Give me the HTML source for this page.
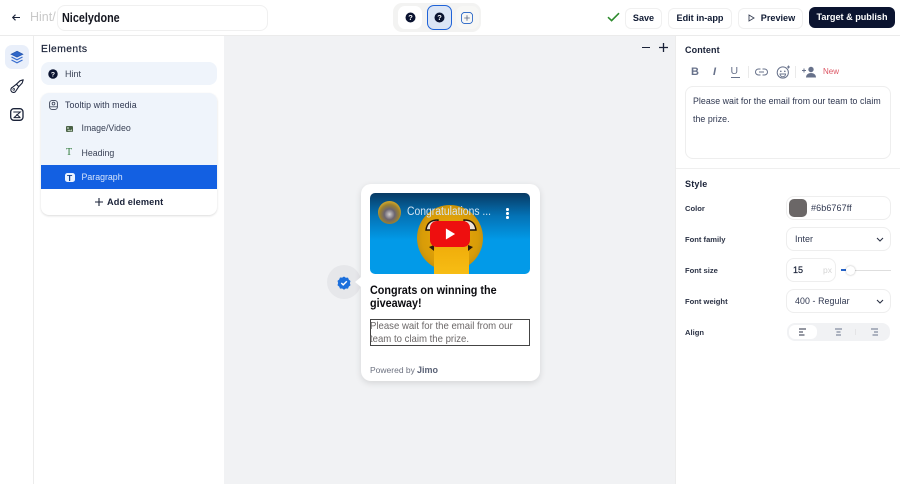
<!DOCTYPE html>
<html><head><meta charset="utf-8">
<style>
html,body{margin:0;padding:0;width:900px;height:484px;overflow:hidden;background:#fff;font-family:"Liberation Sans",sans-serif;color:#0b1530}
.a{position:absolute}
.t{position:absolute;white-space:nowrap;line-height:1}
.sx{transform-origin:0 0}
svg{position:absolute;overflow:visible}
.btn{position:absolute;top:8px;height:19px;border:1px solid #f0f0f0;border-radius:6px;background:#fff;font-weight:700;font-size:9.1px;line-height:19px;text-align:center;color:#0f1a33}
.lbl{position:absolute;left:685px;font-size:7.6px;font-weight:700;color:#2b3245;line-height:1;white-space:nowrap}
.inp{position:absolute;border:1px solid #eeeeee;border-radius:8px;background:#fff;box-sizing:border-box}
</style></head><body>
<!-- top bar -->
<div class="a" style="left:0;top:35px;width:900px;height:1px;background:#ebebeb"></div>
<svg style="left:11px;top:13px" width="10" height="9" viewBox="0 0 10 9"><path d="M9 4.5H1.5M4.5 1.7 1.7 4.5l2.8 2.8" fill="none" stroke="#1a2238" stroke-width="1.1"/></svg>
<div class="t" style="left:30px;top:11px;font-size:12.5px;color:#c9c9c9">Hint/</div>
<div class="inp" style="left:57px;top:5px;width:211px;height:26px;border-color:#f0f0f0"></div>
<div class="t sx" style="left:62px;top:11.5px;font-size:12.5px;font-weight:700;color:#14161f;transform:scaleX(.865)">Nicelydone</div>

<div class="a" style="left:393px;top:3px;width:88px;height:29px;border-radius:9px;background:#f3f3f2"></div>
<div class="a" style="left:398px;top:6px;width:24px;height:23px;border-radius:7px;background:#fff"></div>
<div class="a" style="left:427px;top:5px;width:23px;height:23px;border-radius:7px;background:#dbe5f5;border:1px solid #1f63d8"></div>
<div class="a" style="left:456px;top:6px;width:23px;height:23px;border-radius:7px;background:#f7f7f5"></div>
<svg style="left:405px;top:12px" width="11" height="11" viewBox="0 0 11 11"><circle cx="5.5" cy="5.5" r="5" fill="#0a1330"/><text x="5.5" y="8.2" font-size="7.5" font-weight="700" fill="#fff" text-anchor="middle" font-family="Liberation Sans">?</text></svg>
<svg style="left:434px;top:12px" width="11" height="11" viewBox="0 0 11 11"><circle cx="5.5" cy="5.5" r="5" fill="#0a1330"/><text x="5.5" y="8.2" font-size="7.5" font-weight="700" fill="#fff" text-anchor="middle" font-family="Liberation Sans">?</text></svg>
<svg style="left:461px;top:11.5px" width="12" height="12" viewBox="0 0 13 13"><rect x=".5" y=".5" width="12" height="12" rx="3.5" fill="none" stroke="#1f5fc4" stroke-width=".9"/><path d="M6.5 3.5v6M3.5 6.5h6" stroke="#5b6a85" stroke-width=".9"/></svg>

<svg style="left:607px;top:12px" width="13" height="10" viewBox="0 0 13 10"><path d="M1 5.2 4.6 8.6 12 1.2" fill="none" stroke="#2e8b2e" stroke-width="1.6"/></svg>
<div class="btn" style="left:625px;width:35px">Save</div>
<div class="btn" style="left:668px;width:62px">Edit in-app</div>
<div class="btn" style="left:738px;width:63px;text-indent:15px">Preview</div>
<svg style="left:748px;top:14px" width="7" height="8" viewBox="0 0 7 8"><path d="M1 1l5 3-5 3z" fill="none" stroke="#3a4256" stroke-width=".9"/></svg>
<div class="btn" style="left:809px;width:86px;height:21px;line-height:21px;top:7px;background:#0b1430;border:0;color:#fff">Target &amp; publish</div>

<!-- left rail -->
<div class="a" style="left:33px;top:36px;width:1px;height:448px;background:#ececec"></div>
<div class="a" style="left:5px;top:45px;width:24px;height:24px;border-radius:7px;background:#e9effa"></div>
<svg style="left:10px;top:50px" width="14" height="14" viewBox="0 0 14 14"><path d="M7 1.2 13 4.2 7 7.2 1 4.2z" fill="#2f66c8" stroke="#1f4fa8" stroke-width=".6"/><path d="M1.5 7 7 9.8 12.5 7M1.5 10 7 12.8 12.5 10" fill="none" stroke="#3a6fd0" stroke-width="1.2"/></svg>
<svg style="left:10px;top:79px" width="14" height="14" viewBox="0 0 14 14"><path d="M13.2.8 10 1.8 6.4 5.2 8.8 7.6 12.2 4zM6.4 5.2 2.6 8.2a2.7 2.7 0 1 0 3.4 3.6L8.8 7.6z" fill="none" stroke="#1a2238" stroke-width="1.1" stroke-linejoin="round"/><circle cx="3.8" cy="10.4" r=".9" fill="none" stroke="#1a2238" stroke-width=".7"/></svg>
<svg style="left:10px;top:108px" width="14" height="13" viewBox="0 0 14 13"><rect x=".7" y=".7" width="12.3" height="11.6" rx="3.2" fill="none" stroke="#1a2238" stroke-width="1.3"/><path d="M3.3 4h7L4 9.6M6.5 6.2l3.8 3.4M3.5 9.6h7" fill="none" stroke="#1a2238" stroke-width="1"/></svg>

<!-- elements panel -->
<div class="t" style="left:41px;top:44.5px;font-size:10.3px;color:#1a2238;letter-spacing:.45px;-webkit-text-stroke:.2px #1a2238">Elements</div>
<div class="a" style="left:41px;top:62px;width:176px;height:23px;border-radius:8px;background:#eff4fb"></div>
<svg style="left:48px;top:69px" width="10" height="10" viewBox="0 0 11 11"><circle cx="5.5" cy="5.5" r="5.2" fill="#0a1330"/><text x="5.5" y="8.2" font-size="7.5" font-weight="700" fill="#fff" text-anchor="middle" font-family="Liberation Sans">?</text></svg>
<div class="t" style="left:65px;top:70px;font-size:9px;color:#3a4256">Hint</div>

<div class="a" style="left:41px;top:93px;width:176px;height:122px;border-radius:8px;background:#fff;box-shadow:0 1px 2px rgba(0,0,0,.14);overflow:hidden">
  <div class="a" style="left:0;top:0;width:176px;height:72px;background:#eff4fb"></div>
  <div class="a" style="left:0;top:72px;width:176px;height:24px;background:#1360e2"></div>
</div>
<svg style="left:48.5px;top:100px" width="9" height="10" viewBox="0 0 9 10"><rect x=".6" y=".6" width="7.8" height="8.8" rx="2.4" fill="none" stroke="#3a4256" stroke-width=".9"/><circle cx="4.5" cy="3.6" r="1.4" fill="none" stroke="#3a4256" stroke-width=".8"/><path d="M1 6.8h7" stroke="#3a4256" stroke-width=".8"/></svg>
<div class="t" style="left:65px;top:101px;font-size:8.8px;color:#2f3750;letter-spacing:.1px">Tooltip with media</div>
<svg style="left:66px;top:125.5px" width="7" height="6" viewBox="0 0 7 6"><rect width="7" height="6" rx="1" fill="#4a6146"/><circle cx="2" cy="2" r=".9" fill="#cfe0cb"/><path d="M1 5l2-1.5L4.5 4.5 6 3v2.4z" fill="#b8ccb4"/></svg>
<div class="t" style="left:81.5px;top:124px;font-size:8.8px;color:#3a4256">Image/Video</div>
<div class="t" style="left:66px;top:148px;font-size:10px;color:#2f7a3a;font-family:'Liberation Serif',serif">T</div>
<div class="t" style="left:81.5px;top:149px;font-size:8.8px;color:#3a4256">Heading</div>
<div class="a" style="left:65px;top:172.5px;width:9.5px;height:9.5px;border-radius:2.5px;background:#eaf2ff"></div>
<div class="t" style="left:67px;top:173.5px;font-size:8.5px;color:#12408f;font-weight:700">T</div>
<div class="t" style="left:81.5px;top:173px;font-size:8.8px;color:#d6e4fb">Paragraph</div>
<svg style="left:95px;top:198px" width="8" height="8" viewBox="0 0 8 8"><path d="M4 0v8M0 4h8" stroke="#1a2238" stroke-width="1.1"/></svg>
<div class="t" style="left:107px;top:198px;font-size:9.2px;font-weight:700;color:#1a2238;letter-spacing:.1px">Add element</div>

<!-- canvas -->
<div class="a" style="left:224px;top:36px;width:452px;height:448px;background:#f1f2f4"></div>
<div class="a" style="left:642px;top:46.5px;width:8px;height:1.3px;background:#1a2238"></div>
<svg style="left:659px;top:43px" width="9" height="9" viewBox="0 0 9 9"><path d="M4.5 0v9M0 4.5h9" stroke="#1a2238" stroke-width="1.3"/></svg>

<div class="a" style="left:327px;top:265px;width:34px;height:34px;border-radius:50%;background:#e6e7ea"></div>
<svg style="left:337px;top:276px" width="14" height="14" viewBox="0 0 14 14"><path d="M7 .5l1.8 1.2 2.2-.1.8 2 1.7 1.4-.6 2.1.6 2.1-1.7 1.4-.8 2-2.2-.1L7 13.7l-1.8-1.2-2.2.1-.8-2L.5 9.2 1.1 7 .5 4.9l1.7-1.4.8-2 2.2.1z" fill="#1b6fdc"/><path d="M4.3 7 6.2 8.9 9.8 5.2" fill="none" stroke="#fff" stroke-width="1.4"/></svg>

<div class="a" style="left:361px;top:184px;width:179px;height:197px;border-radius:10px;background:#fff;box-shadow:0 2px 7px rgba(0,0,0,.12)"></div>
<div class="a" style="left:355px;top:277px;width:0;height:0;border-top:5px solid transparent;border-bottom:5px solid transparent;border-right:6px solid #fff"></div>

<!-- video -->
<div class="a" style="left:370px;top:193px;width:160px;height:81px;border-radius:5px;overflow:hidden;background:linear-gradient(#083a63 0%,#0472b5 28%,#029ae8 58%,#029ae8 100%)">
  <div class="a" style="left:47px;top:12px;width:66px;height:66px;border-radius:50%;background:radial-gradient(circle at 50% 50%,#eeac0b 0%,#d89c08 60%,#b38610 85%,#8f7a2a 100%)"></div>
  <div class="a" style="left:64px;top:53px;width:35px;height:28px;background:linear-gradient(#f0ad0a,#f7bd14);border-radius:5px 5px 0 0"></div>
  <svg style="left:54px;top:26px" width="54" height="32" viewBox="0 0 54 32"><path d="M2 11C3 3 8 1 14 1L14 11zM52 11C51 3 46 1 40 1L40 11z" fill="#efe3d8" stroke="#22140c" stroke-width="1.4"/><path d="M5 28l5-2v6zM49 28l-5-2v6z" fill="#2a1a0c"/></svg>
  <div class="a" style="left:8px;top:8px;width:23px;height:23px;border-radius:50%;background:radial-gradient(circle at 50% 58%,#d3d0ce 0%,#6a6470 30%,#9a8030 55%,#dcae2a 78%,#6a4a14 100%)"></div>
  <div class="t" style="left:37px;top:14px;font-size:11.5px;color:#d4e4f2;transform-origin:0 0;transform:scaleX(.9)">Congratulations ...</div>
  <div class="a" style="left:136px;top:15px;width:2.5px;height:2.5px;border-radius:50%;background:#fff;box-shadow:0 4px 0 #fff,0 8px 0 #fff"></div>
  <div class="a" style="left:60px;top:28px;width:40px;height:26px;border-radius:7px;background:#ee0f0f"></div>
  <svg style="left:75px;top:35px" width="11" height="12" viewBox="0 0 12 13"><path d="M1 .5 11 6.5 1 12.5z" fill="#fff"/></svg>
</div>
<div class="t sx" style="left:370px;top:283.5px;font-size:12px;font-weight:700;color:#0b0b0f;line-height:13.5px;transform:scaleX(.9)">Congrats on winning the<br>giveaway!</div>
<div class="a" style="left:370px;top:319px;width:160px;height:27px;border:1px solid #444;box-sizing:border-box"></div>
<div class="t sx" style="left:370px;top:319.5px;font-size:10.2px;color:#6b6767;line-height:13.5px;transform:scaleX(.94)">Please wait for the email from our<br>team to claim the prize.</div>
<div class="t" style="left:370px;top:366px;font-size:8.5px;color:#6d7280">Powered by</div>
<div class="t" style="left:417px;top:365.5px;font-size:9px;font-weight:700;color:#5a6276">Jimo</div>

<!-- right panel -->
<div class="a" style="left:675px;top:36px;width:1px;height:448px;background:#ececec"></div>
<div class="a" style="left:676px;top:168px;width:224px;height:1px;background:#efefef"></div>
<div class="t" style="left:685px;top:46px;font-size:9px;font-weight:700;color:#1a2238;letter-spacing:.1px">Content</div>
<div class="t" style="left:691px;top:67px;font-size:11px;font-weight:700;color:#67718a">B</div>
<div class="t" style="left:713px;top:67px;font-size:11px;font-style:italic;font-weight:700;color:#67718a">I</div>
<div class="t" style="left:730.5px;top:66px;font-size:10.5px;color:#67718a">U</div>
<div class="a" style="left:730.5px;top:77px;width:9px;height:1px;background:#67718a"></div>
<div class="a" style="left:748px;top:66px;width:1px;height:12px;background:#eaeaea"></div>
<div class="a" style="left:795px;top:66px;width:1px;height:12px;background:#eaeaea"></div>
<svg style="left:755px;top:68px" width="13" height="8" viewBox="0 0 13 8"><path d="M5.5 1H3.5a3 3 0 0 0 0 6h2M7.5 1h2a3 3 0 0 1 0 6h-2M4 4h5" fill="none" stroke="#67718a" stroke-width="1"/></svg>
<svg style="left:776px;top:65px" width="15" height="14" viewBox="0 0 15 14"><circle cx="6.8" cy="7.5" r="5.6" fill="none" stroke="#67718a" stroke-width="1"/><circle cx="4.8" cy="6.3" r=".8" fill="#67718a"/><circle cx="8.8" cy="6.3" r=".8" fill="#67718a"/><path d="M4 9h5.6a2.8 2.8 0 0 1-5.6 0zM12.5 .5v3M11 2h3" fill="none" stroke="#67718a" stroke-width=".9"/></svg>
<svg style="left:802px;top:66px" width="14" height="12" viewBox="0 0 14 12"><circle cx="9" cy="3.5" r="2.7" fill="#67718a"/><path d="M4 11.5c0-6 10-6 10 0z" fill="#67718a"/><path d="M2 2.5v4M0 4.5h4" stroke="#67718a" stroke-width="1"/></svg>
<div class="t" style="left:823px;top:68px;font-size:8px;color:#dc5563">New</div>
<div class="inp" style="left:685px;top:86px;width:206px;height:73px"></div>
<div class="t" style="left:693px;top:92px;font-size:8.8px;color:#2f3750;line-height:18px;letter-spacing:.04px">Please wait for the email from our team to claim<br>the prize.</div>

<div class="t" style="left:685px;top:180px;font-size:9px;font-weight:700;color:#1a2238;letter-spacing:.2px">Style</div>
<div class="lbl" style="top:205px">Color</div>
<div class="lbl" style="top:236px">Font family</div>
<div class="lbl" style="top:267px">Font size</div>
<div class="lbl" style="top:298px">Font weight</div>
<div class="lbl" style="top:329px">Align</div>

<div class="inp" style="left:786px;top:196px;width:105px;height:24px"></div>
<div class="a" style="left:789px;top:199px;width:18px;height:18px;border-radius:5px;background:#6b6767"></div>
<div class="t" style="left:811px;top:203.5px;font-size:9px;color:#2f3750;letter-spacing:.1px">#6b6767ff</div>

<div class="inp" style="left:786px;top:227px;width:105px;height:24px"></div>
<div class="t" style="left:795px;top:235px;font-size:9px;color:#2f3750">Inter</div>
<svg style="left:876px;top:237px" width="8" height="5" viewBox="0 0 8 5"><path d="M1 1l3 3 3-3" fill="none" stroke="#2b3245" stroke-width="1.1"/></svg>

<div class="inp" style="left:786px;top:258px;width:50px;height:24px"></div>
<div class="t" style="left:793px;top:266px;font-size:9px;color:#1a2238;-webkit-text-stroke:.2px #1a2238">15</div>
<div class="t" style="left:823px;top:266px;font-size:8.5px;color:#d4d4d4">px</div>
<div class="a" style="left:841px;top:269px;width:5px;height:1.5px;background:#2563c9"></div>
<div class="a" style="left:846px;top:269.5px;width:45px;height:1px;background:#dedede"></div>
<div class="a" style="left:846px;top:265.5px;width:9px;height:9px;border-radius:50%;background:#fff;box-shadow:0 0 2px rgba(0,0,0,.3)"></div>

<div class="inp" style="left:786px;top:289px;width:105px;height:24px"></div>
<div class="t" style="left:795px;top:297px;font-size:8.8px;color:#2f3750;letter-spacing:.1px">400 - Regular</div>
<svg style="left:876px;top:299px" width="8" height="5" viewBox="0 0 8 5"><path d="M1 1l3 3 3-3" fill="none" stroke="#2b3245" stroke-width="1.1"/></svg>

<div class="a" style="left:787px;top:323px;width:103px;height:18px;border-radius:8px;background:#f1f2f4"></div>
<div class="a" style="left:789px;top:325px;width:28px;height:14px;border-radius:6px;background:#fff"></div>
<div class="a" style="left:855px;top:329px;width:1px;height:6px;background:#e4e4e6"></div>
<svg style="left:799px;top:328px" width="7" height="8" viewBox="0 0 7 8"><path d="M0 1h7M0 4h4M0 7h5.5" stroke="#2b3245" stroke-width=".9"/></svg>
<svg style="left:835px;top:328px" width="7" height="8" viewBox="0 0 7 8"><path d="M0 1h7M1.5 4h4M1 7h5" stroke="#67718a" stroke-width=".9"/></svg>
<svg style="left:871px;top:328px" width="7" height="8" viewBox="0 0 7 8"><path d="M0 1h7M3 4h4M1.5 7h5.5" stroke="#67718a" stroke-width=".9"/></svg>
</body></html>
